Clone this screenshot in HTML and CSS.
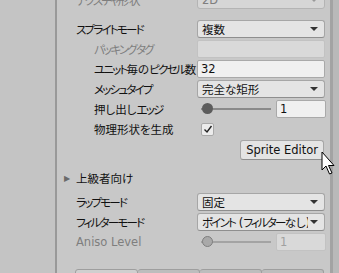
FILE: index.html
```html
<!DOCTYPE html>
<html lang="ja">
<head>
    <meta charset="UTF-8">
    <title>インスペクター</title>
    <link rel="stylesheet" href="styles.css">
</head>
<body>
    <div class="window">
        <div class="side"></div>
        <div class="divider"></div>
        <div class="inspector">
            <div class="row first">
                <span class="label disabled"><span class="k">テクスチャ</span>形状</span>
                <div class="popup disabled"><span class="value">2D</span><span class="arrow"></span></div>
            </div>

            <div class="row">
                <span class="label"><span class="k">スプライトモード</span></span>
                <div class="popup"><span class="value">複数</span><span class="arrow"></span></div>
            </div>
            <div class="row">
                <span class="label sub disabled"><span class="k">パッキングタグ</span></span>
                <div class="field disabled"></div>
            </div>
            <div class="row">
                <span class="label sub"><span class="k">ユニット</span>毎の<span class="k">ピクセル</span>数</span>
                <div class="field">32</div>
            </div>
            <div class="row">
                <span class="label sub"><span class="k">メッシュタイプ</span></span>
                <div class="popup"><span class="value">完全な矩形</span><span class="arrow"></span></div>
            </div>
            <div class="row">
                <span class="label sub">押し出し<span class="k">エッジ</span></span>
                <div class="slider">
                    <div class="track"><span class="knob"></span></div>
                    <div class="field small">1</div>
                </div>
            </div>
            <div class="row">
                <span class="label sub">物理形状を生成</span>
                <div class="check">
                    <svg width="10" height="10" viewBox="0 0 10 10"><path d="M1.5 5.5 L4 8 L8.5 2" fill="none" stroke="#222" stroke-width="1.4"/></svg>
                </div>
            </div>
            <div class="button-row">
                <button class="btn">Sprite Editor</button>
            </div>

            <div class="row foldout">
                <span class="tri">&#9654;</span>
                <span class="label">上級者向け</span>
            </div>

            <div class="row">
                <span class="label"><span class="k">ラップモード</span></span>
                <div class="popup"><span class="value">固定</span><span class="arrow"></span></div>
            </div>
            <div class="row">
                <span class="label"><span class="k">フィルターモード</span></span>
                <div class="popup"><span class="value"><span class="k">ポイント</span> (<span class="k">フィルター</span>なし)</span><span class="arrow"></span></div>
            </div>
            <div class="row">
                <span class="label disabled">Aniso Level</span>
                <div class="slider off">
                    <div class="track"><span class="knob"></span></div>
                    <div class="field small disabled">1</div>
                </div>
            </div>

            <div class="tabs">
                <div class="tab active"></div>
                <div class="tab"><span class="icon"></span></div>
                <div class="tab"><span class="icon"></span></div>
                <div class="tab"><span class="icon thin"></span></div>
            </div>
        </div>
        <div class="scroll"></div>
    </div>

    <svg class="cursor" width="16" height="26" viewBox="0 0 16 26">
        <path d="M1 1 L1 19 L5 15 L8.5 23 L11 22 L7.5 14.5 L13 14.5 Z" fill="#fff" stroke="#000" stroke-width="1"/>
    </svg>
</body>
</html>
```

FILE: styles.css
```css
body {
    margin: 0;
    background-color: #c8c8c8;
    font-family: "DejaVu Sans", "Noto Sans CJK JP", sans-serif;
    font-size: 11.5px;
    color: #111;
    overflow: hidden;
}
.window {
    display: flex;
    width: 339px;
    height: 273px;
    overflow: hidden;
    position: relative;
}
.side {
    flex: none;
    width: 55px;
    background-color: #c4c4c4;
}
.divider {
    flex: none;
    width: 2px;
    background-color: #999999;
}
.inspector {
    flex: 1;
    min-width: 0;
    padding: 0 5px 0 19px;
    background-color: #c8c8c8;
}
.scroll {
    flex: none;
    width: 3px;
    background-color: #a3a3a3;
    border-right: 6px solid #b9b9b9;
}
.row {
    display: flex;
    align-items: center;
    height: 18px;
    margin-bottom: 2px;
}
.row.first {
    margin-top: -9px;
    margin-bottom: 11px;
}
.label {
    width: 121px;
    flex-shrink: 0;
    white-space: nowrap;
    font-feature-settings: "palt";
}
.label.sub {
    padding-left: 18px;
    width: 103px;
}
/* カタカナは狭め */
.k {
    letter-spacing: -1.8px;
}
.disabled {
    color: #7e7e7e;
}
.popup {
    flex: 1;
    min-width: 0;
    height: 16px;
    display: flex;
    align-items: center;
    background-color: #e4e4e4;
    border: 1px solid #a6a6a6;
    border-bottom-color: #8e8e8e;
    border-radius: 3px;
    padding: 0 6px 0 4px;
}
.popup.disabled {
    background-color: #d6d6d6;
    border-color: #b4b4b4;
}
.popup .value {
    flex: 1;
    min-width: 0;
    white-space: nowrap;
    overflow: hidden;
    font-feature-settings: "palt";
}
.arrow {
    flex: none;
    width: 0;
    height: 0;
    border-left: 4px solid transparent;
    border-right: 4px solid transparent;
    border-top: 4px solid #333;
    margin-left: 2px;
}
.popup.disabled .arrow {
    border-top-color: #999;
}
.field {
    flex: 1;
    height: 16px;
    line-height: 16px;
    background-color: #f0f0f0;
    border: 1px solid #a9a9a9;
    border-radius: 2px;
    padding-left: 3px;
}
.field.disabled {
    background-color: #d9d9d9;
    border-color: #c2c2c2;
    color: #a0a0a0;
}
.slider {
    flex: 1;
    display: flex;
    align-items: center;
}
.track {
    width: 70px;
    height: 2px;
    margin: 0 5px 0 4px;
    background-color: #8a8a8a;
    position: relative;
}
.knob {
    position: absolute;
    left: 1px;
    top: -5px;
    width: 11px;
    height: 11px;
    border-radius: 50%;
    background-color: #5c5c5c;
}
.slider.off .track {
    background-color: #a3a3a3;
}
.slider.off .knob {
    background-color: #a9a9a9;
    border: 1px solid #7e7e7e;
    width: 9px;
    height: 9px;
}
.field.small {
    flex: none;
    width: 45px;
}
.check {
    width: 11px;
    height: 11px;
    margin-left: 4px;
    background-color: #ececec;
    border: 1px solid #a9a9a9;
    border-radius: 2px;
    display: flex;
    align-items: center;
    justify-content: center;
}
.button-row {
    display: flex;
    justify-content: flex-end;
    margin-top: 1px;
    padding-right: 1px;
}
.btn {
    font-family: "DejaVu Sans", sans-serif;
    font-size: 11.5px;
    color: #111;
    height: 20px;
    padding: 0 5px;
    background-color: #e4e4e4;
    border: 1px solid #a6a6a6;
    border-bottom-color: #8e8e8e;
    border-radius: 3px;
}
.foldout {
    margin-top: 9px;
    margin-bottom: 6px;
    margin-left: -12px;
}
.tri {
    width: 12px;
    font-size: 8px;
    color: #6a6a6a;
}
.tabs {
    display: flex;
    margin-top: 18px;
    margin-left: -1px;
    margin-right: 1px;
}
.tab {
    flex: 1;
    height: 22px;
    background-color: #bdbdbd;
    border: 1px solid #9e9e9e;
    border-left: none;
    border-radius: 3px 3px 0 0;
    display: flex;
    justify-content: center;
    padding-top: 3px;
}
.tab.active {
    background-color: #cfcfcf;
    border-left: 1px solid #9e9e9e;
}
.icon {
    width: 14px;
    height: 3px;
    background-color: #444;
}
.icon.thin {
    width: 8px;
}
.cursor {
    position: absolute;
    left: 321px;
    top: 151px;
}
```
